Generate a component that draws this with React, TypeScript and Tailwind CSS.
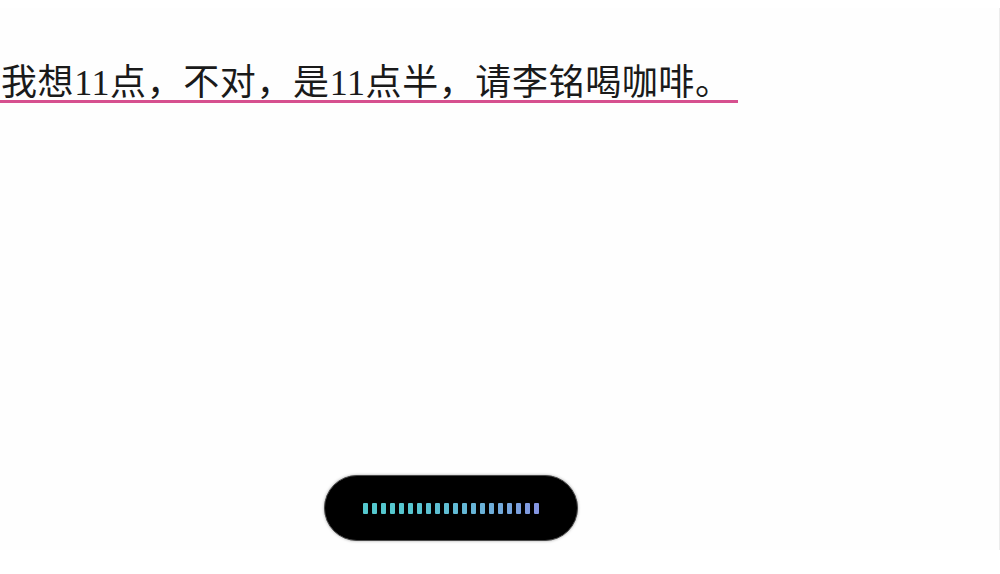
import React from 'react';

const BAR_COUNT = 20;

// teal for most of the bar, turning a soft blue towards the right end
const barColor = (i: number) => {
    const t = Math.pow(i / (BAR_COUNT - 1), 2);
    const from = [84, 200, 206];
    const to = [132, 150, 226];
    const c = from.map((v, k) => Math.round(v + (to[k] - v) * t));
    return `rgb(${c[0]}, ${c[1]}, ${c[2]})`;
};

function VoicePill() {
    return (
        <div className="ml-[324px] flex h-[66px] w-[254px] items-center justify-center rounded-full border border-[#4a4a4a] bg-black shadow-[0_0_3px_rgba(0,0,0,0.35)]">
            <div className="flex items-center gap-[4px]">
                {Array.from({ length: BAR_COUNT }).map((_, i) => (
                    <span
                        key={i}
                        className="block h-[11px] w-[5px] rounded-[1px]"
                        style={{ backgroundColor: barColor(i) }}
                    />
                ))}
            </div>
        </div>
    );
}

export default function App() {
    return (
        <main className="h-[574px] w-[1000px] overflow-hidden bg-white pt-2">
            <div className="flex h-[542px] flex-col border-r border-[#ececec] bg-[#fefefe]">
                {/* transcript line */}
                <div className="pt-[58px]">
                    <p
                        className="w-[738px] whitespace-nowrap border-b-[3px] border-[#d6508f] pl-[1px] text-[36px] leading-[34px] tracking-[0.6px] text-[#1a1a1a]"
                        style={{ fontFamily: '"Liberation Serif", "Noto Sans CJK SC", serif' }}
                    >
                        我想11点，不对，是11点半，请李铭喝咖啡。
                    </p>
                </div>

                {/* listening indicator */}
                <div className="mt-auto mb-[9px]">
                    <VoicePill />
                </div>
            </div>
        </main>
    );
}
